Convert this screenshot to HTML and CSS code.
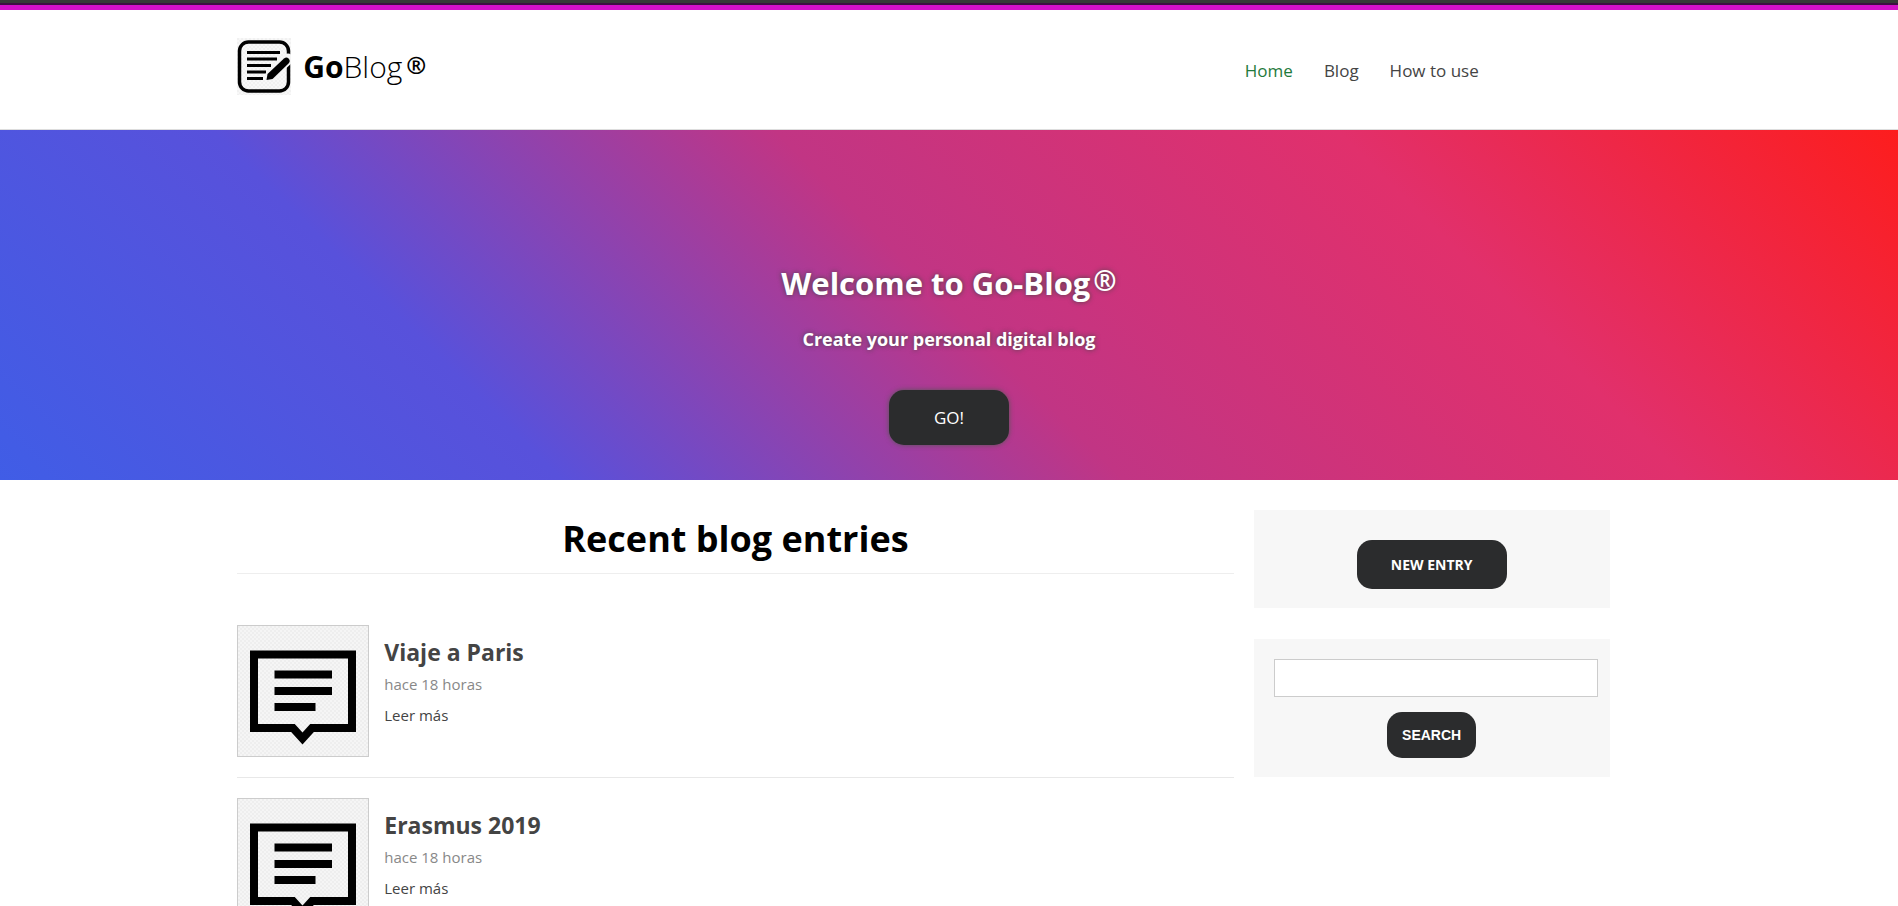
FILE: index.html
```html
<!DOCTYPE html>
<html lang="en">
<head>
<meta charset="utf-8">
<title>GoBlog</title>
<link rel="stylesheet" href="styles.css">
</head>
<body>
<div class="topbar"></div>
<header class="header">
  <div class="container header-inner">
    <a class="brand" href="#">
      <svg class="brand-icon" viewBox="0 0 54 57" aria-hidden="true">
        <rect x="2.500" y="4" width="49" height="49" rx="9" fill="none" stroke="#000" stroke-width="3.500"/>
        <path d="M10 14.500H43M10 21H40M10 27.500H34M10 34H29M10 40.500H26" fill="none" stroke="#000" stroke-width="3"/>
        <path d="M34 37L51 21" stroke="#f4f4f4" stroke-width="11" stroke-linecap="round"/>
        <path d="M47 20.500Q49.500 18.500 51.500 20.500Q54 23 51.500 25.500L35.500 41L29.500 42L30.500 36Z"/>
      </svg>
      <span class="brand-name"><strong>Go</strong>Blog<strong class="reg">®</strong></span>
    </a>
    <nav class="nav" aria-label="Main">
      <a class="active" href="#">Home</a>
      <a href="#">Blog</a>
      <a href="#">How to use</a>
    </nav>
  </div>
</header>
<section class="hero">
  <h1>Welcome to Go-Blog<span class="reg">®</span></h1>
  <h2>Create your personal digital blog</h2>
  <a class="go" href="#">GO!</a>
</section>
<div class="container page">
  <main class="content">
    <h2 class="subheader">Recent blog entries</h2>
    <article class="entry">
      <div class="thumb">
        <svg viewBox="0 0 130 130" aria-hidden="true">
          <path d="M16 28.500H114V102H74L64.500 112.500L55 102H16Z" fill="none" stroke="#000" stroke-width="8"/>
          <path d="M36.500 48.500H94M36.500 65H94M36.500 81H77.500" stroke="#000" stroke-width="8"/>
        </svg>
      </div>
      <div class="entry-text">
        <h3>Viaje a Paris</h3>
        <span class="date">hace 18 horas</span>
        <a href="#">Leer más</a>
      </div>
    </article>
    <article class="entry">
      <div class="thumb">
        <svg viewBox="0 0 130 130" aria-hidden="true">
          <path d="M16 28.500H114V102H74L64.500 112.500L55 102H16Z" fill="none" stroke="#000" stroke-width="8"/>
          <path d="M36.500 48.500H94M36.500 65H94M36.500 81H77.500" stroke="#000" stroke-width="8"/>
        </svg>
      </div>
      <div class="entry-text">
        <h3>Erasmus 2019</h3>
        <span class="date">hace 18 horas</span>
        <a href="#">Leer más</a>
      </div>
    </article>
  </main>
  <aside class="sidebar">
    <div class="panel panel-new">
      <a class="btn btn-new" href="#">NEW ENTRY</a>
    </div>
    <form class="panel panel-search">
      <input type="text" name="search" aria-label="Search">
      <button class="btn btn-search" type="button">SEARCH</button>
    </form>
  </aside>
</div>
</body>
</html>
```
FILE: styles.css
```css
* { box-sizing: border-box; margin: 0; padding: 0; }

html { overflow: hidden; height: 100%; }

body {
  height: 100%;
  background: #fff;
  color: #444;
  font-family: "Open Sans", "Noto Sans", sans-serif;
}

a { color: inherit; text-decoration: none; }

.topbar {
  height: 10px;
  background: linear-gradient(#363a36 0 3px, #3c1040 3px 5px, #d411c8 5px);
}

.container { width: 75%; margin: 0 auto; }

.header { border-bottom: 1px solid #ddd; }

.header-inner {
  display: flex;
  justify-content: space-between;
  align-items: center;
  height: 119px;
}

.brand { display: flex; align-items: center; gap: 12px; padding-bottom: 6px; color: #000; }

.brand-icon {
  width: 54px;
  height: 57px;
  background: repeating-conic-gradient(#f8f8f8 0 25%, #f1f1f1 0 50%) 0 0 / 4px 4px;
}

.brand-name { font-size: 30px; font-weight: 300; line-height: 40px; }
.brand-name strong { font-weight: 700; }
.brand-name .reg { margin-left: 4px; font-size: 24px; line-height: 24px; vertical-align: 4px; }

.nav { display: flex; gap: 31px; margin-right: 182px; padding-top: 2px; font-size: 17px; line-height: 24px; }
.nav .active { color: #1f7a3c; }

.hero {
  display: flex;
  flex-direction: column;
  align-items: center;
  height: 350px;
  padding-top: 131px;
  color: #fff;
  background: linear-gradient(45deg, #405de6, #5851db, #c13584, #e1306c, #fd1d1d);
}

.hero h1 { font-size: 31px; line-height: 44px; text-shadow: 0 0 5px #444; }
.hero .reg { margin-left: 3px; font-size: 28px; line-height: 28px; vertical-align: 4px; }
.hero h2 { margin-top: 21px; font-size: 18px; line-height: 26px; text-shadow: 0 0 5px #444; }

.go {
  width: 120px;
  margin-top: 38px;
  border-radius: 15px;
  background: #2b2c2d;
  box-shadow: 0 0 5px #555;
  font-size: 17px;
  line-height: 55px;
  text-align: center;
}

.page { display: flex; align-items: flex-start; gap: 20px; padding-top: 30px; }

.content { width: 70%; }

.subheader {
  margin-bottom: 31px;
  padding-bottom: 6px;
  border-bottom: 1px solid #eee;
  color: #000;
  font-size: 36px;
  line-height: 57px;
  text-align: center;
}

.entry {
  display: flex;
  gap: 15px;
  padding: 20px 0;
  border-bottom: 1px solid #e8e8e8;
}

.thumb {
  width: 132px;
  height: 132px;
  border: 1px solid #ccc;
  background: repeating-conic-gradient(#f5f5f5 0 25%, #eee 0 50%) 0 0 / 4px 4px;
}
.thumb svg { display: block; }

.entry-text { display: flex; flex-direction: column; padding-top: 11px; }
.entry-text h3 { margin-bottom: 4px; font-size: 23px; line-height: 32px; }
.entry-text .date { margin-bottom: 7px; color: #888; font-size: 15px; line-height: 24px; }
.entry-text a { font-size: 15px; line-height: 24px; }

.sidebar { display: flex; flex-direction: column; gap: 31px; width: 25%; }

.panel {
  display: flex;
  flex-direction: column;
  align-items: center;
  background: #f7f7f7;
}
.panel-new { padding: 30px 20px 19px; }
.panel-search { gap: 15px; padding: 20px 20px 19px; }

.panel input {
  align-self: flex-start;
  width: calc(100% + 8px);
  height: 38px;
  padding: 0 10px;
  border: 1px solid #ccc;
  background: #fff;
  font-size: 16px;
}

.btn {
  border: 0;
  border-radius: 15px;
  background: #2b2c2d;
  color: #fff;
  font-weight: 700;
  text-align: center;
}
.btn-new { width: 150px; font-size: 14px; line-height: 49px; }
.btn-search {
  padding: 0 15px;
  font-family: "Liberation Sans", Arial, sans-serif;
  font-size: 14px;
  line-height: 46px;
}
```
